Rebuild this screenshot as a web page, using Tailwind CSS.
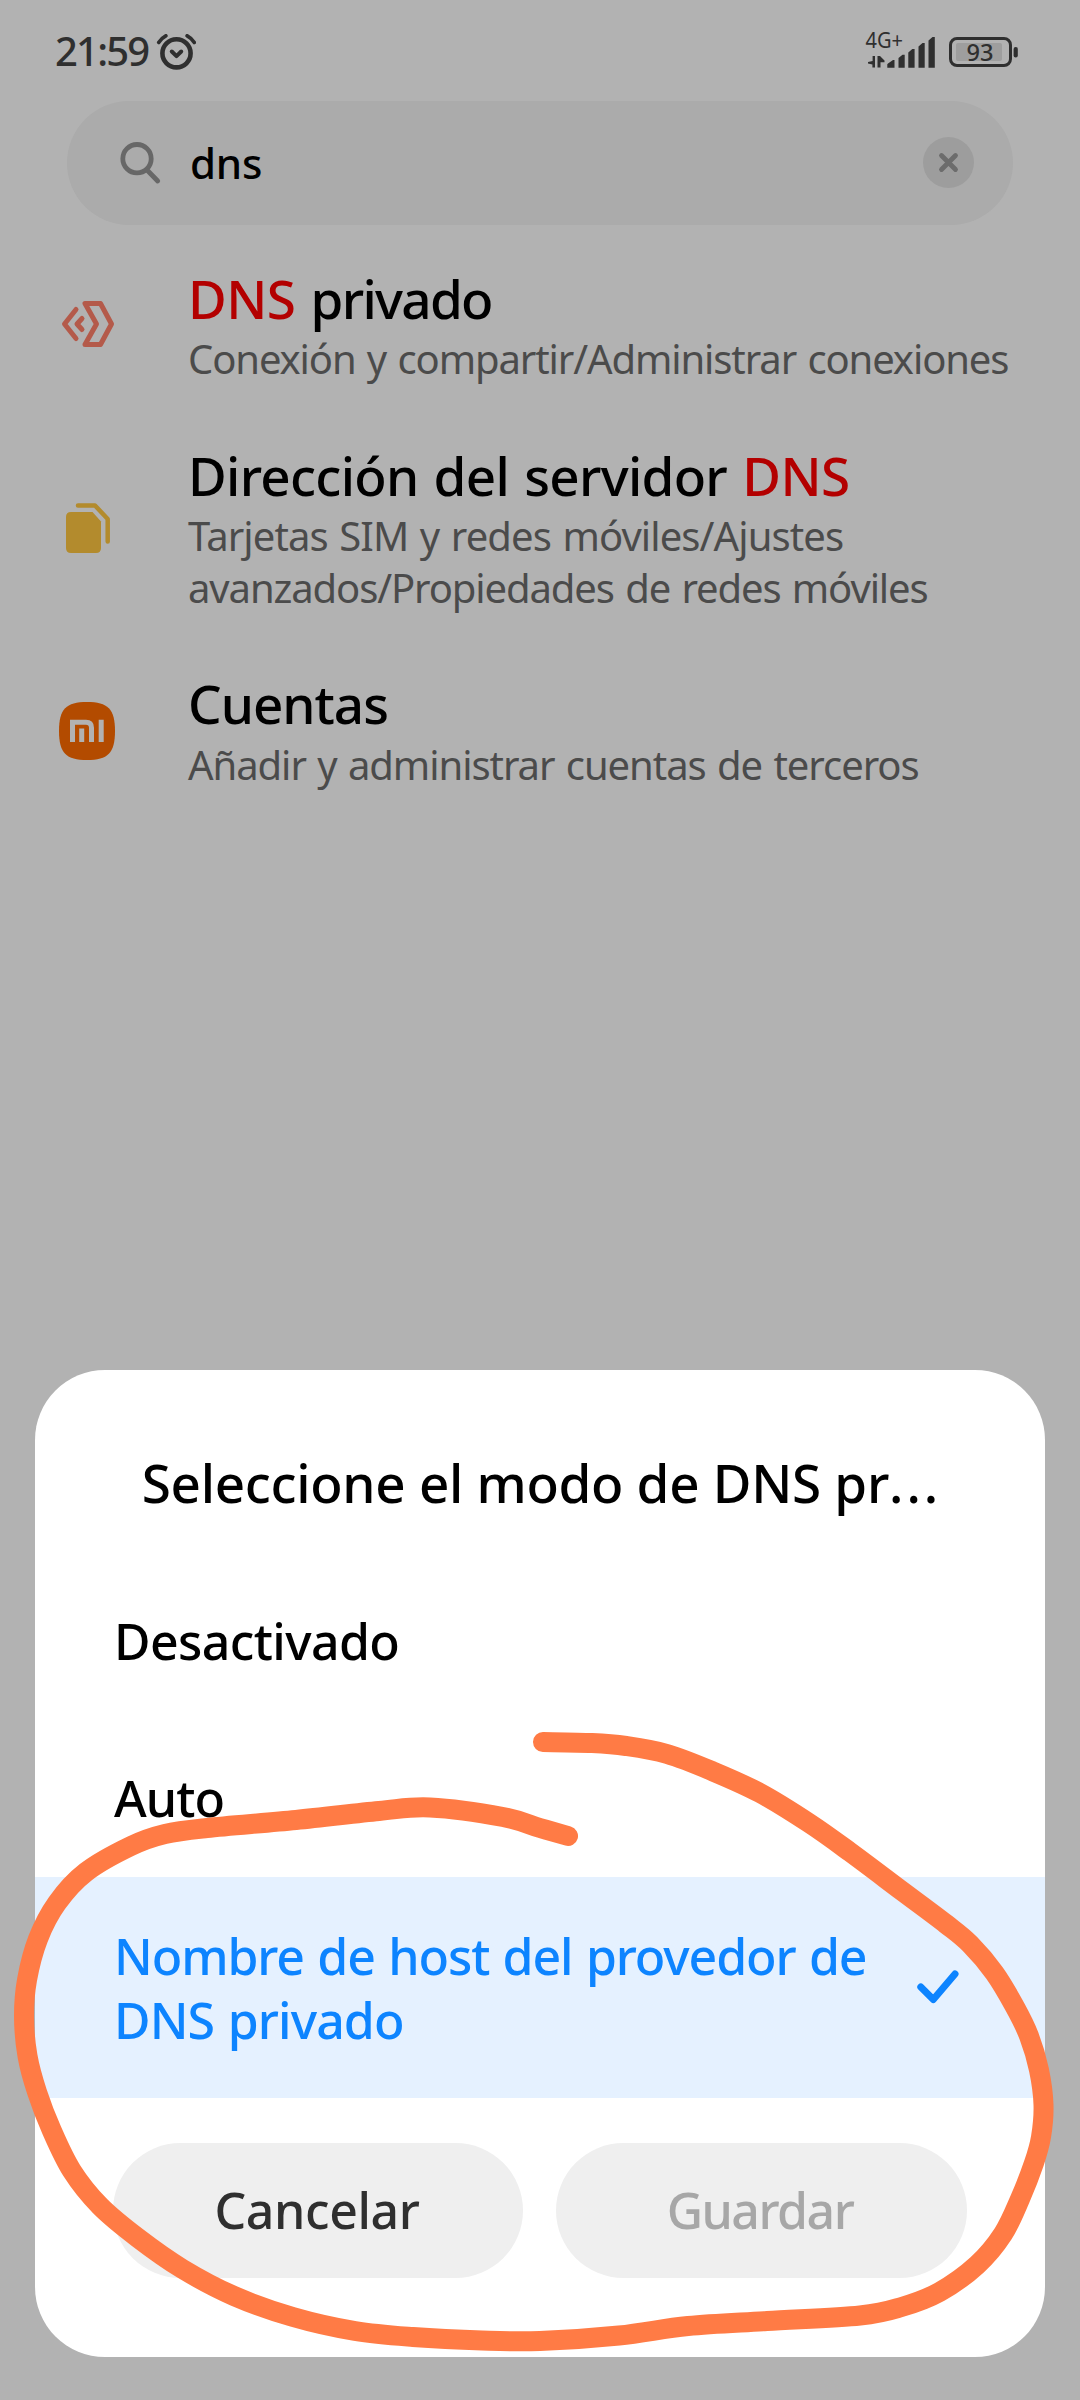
<!DOCTYPE html>
<html lang="es">
<head>
<meta charset="utf-8">
<title>Ajustes</title>
<script src="https://cdn.jsdelivr.net/npm/@tailwindcss/browser@4"></script>
</head>
<body class="relative w-[1080px] h-[2400px] overflow-hidden bg-[#b2b2b2] font-['Noto_Sans',sans-serif] text-black">

<header class="flex h-[101px] items-center justify-between pl-[55px] pr-[62px] text-[#2f2f2f]">
  <div class="flex items-center">
    <span class="w-[101px] text-[40px] leading-[101px] font-medium tracking-[-1.8px] whitespace-nowrap">21:59</span>
    <svg class="mt-[5px] h-[38px] w-[40px]" viewBox="156 34 40 38" fill="none" stroke="currentColor" stroke-linecap="round" stroke-linejoin="round"><circle cx="176.5" cy="53.3" r="14.1" stroke-width="4.6"/><path d="M158.8 42.4Q161 38.5 165.8 35.9M187.2 35.9Q192 38.5 194.2 42.4" stroke-width="3.8"/><path d="M171.8 51.5l4.7 4.6 4.7-4.6" stroke-width="4"/></svg>
  </div>
  <svg class="mt-[3px] h-[60px] w-[158px]" viewBox="860 22 158 60" fill="currentColor">
    <text x="865.5" y="48.2" font-size="21" textLength="37.5" lengthAdjust="spacingAndGlyphs">4G+</text>
    <path d="M872.600 56h2.400v11.500h-2.600v-3L868 63.500v-1.500l4.600-1zM877.500 56h2.500l4.500 4.500v1.800h-4v5.200h-3z"/>
    <path d="M888 63.500l5-3.500h1.500v7.800h-7.200v-3.500zM898.500 58l4-3.200h2.200v13h-6.200zM908.300 52.500l4-3.500h2.300v18.800h-6.300zM918.500 46.500l4-3.500h2.200v24.800h-6.200zM928.500 40.500l4-3.500h2.300v30.800h-6.300z"/>
    <rect x="956" y="43" width="46" height="18" rx="2" fill="#9e9e9e"/>
    <rect x="950.500" y="38.500" width="60" height="27" rx="6.500" fill="none" stroke="currentColor" stroke-width="3"/>
    <rect x="1013.600" y="47" width="4.200" height="10.500" rx="2"/>
    <text x="966.500" y="61" font-size="24" font-weight="500" textLength="27" lengthAdjust="spacingAndGlyphs">93</text>
  </svg>
</header>

<div class="mx-[67px] flex h-[124px] items-center rounded-full bg-[#ababab] pl-[50px] pr-[39px]">
  <svg class="h-[46px] w-[46px]" viewBox="117 140 46 46" fill="none" stroke="#676767" stroke-width="4.8" stroke-linecap="round"><circle cx="137" cy="158.7" r="14.2"/><path d="M147.5 170.5L157.7 181"/></svg>
  <span class="ml-[27px] flex-1 text-[42px] leading-[124px] font-medium tracking-[-0.2px]">dns</span>
  <svg class="mb-px h-[51px] w-[51px]" viewBox="0 0 51 51"><circle cx="25.5" cy="25.5" r="25.5" fill="#9d9d9d"/><path d="M18.500 18.500l14 14M32.500 18.500l-14 14" stroke="#6c6c6c" stroke-width="4.800" stroke-linecap="round"/></svg>
</div>

<main class="mt-[39px] flex flex-col gap-[56px] pl-[59px] whitespace-nowrap">
  <section class="flex items-center">
    <svg class="mr-[73px] mb-[2px] h-[56px] w-[56px]" viewBox="59 296 56 56" fill="none" stroke="#b45a4a" stroke-width="5" stroke-linecap="round" stroke-linejoin="round"><path d="M85 303.500h15.500L111.500 324l-11 20.500H85L96.500 324zM76 309.500L64.500 324 76 338.500M82 318.500l-5 5.500 5 5.500"/></svg>
    <div class="pt-px">
      <h2 class="text-[53px] leading-[68px] font-medium tracking-[-1.7px]"><span class="tracking-[-0.5px] text-[#b30000]">DNS</span><span class="ml-[3px]"> privado</span></h2>
      <p class="text-[40px] leading-[52px] tracking-[-1.1px] [word-spacing:2px] text-[#4b4b4b]">Conexión y compartir/Administrar conexiones</p>
    </div>
  </section>
  <section class="flex items-center">
    <svg class="mr-[73px] h-[56px] w-[56px]" viewBox="59 500 56 56"><path d="M71 512h21.500L101 521.500V548q0 5-5 5H71q-5 0-5-5V517q0-5 5-5z" fill="#b38b2d"/><path d="M78 505.500h17l12.700 13.500V541.500" fill="none" stroke="#b38b2d" stroke-width="4.500" stroke-linecap="round" stroke-linejoin="round"/></svg>
    <div class="pt-px">
      <h2 class="text-[53px] leading-[68px] font-medium tracking-[-0.7px] [word-spacing:2px]">Dirección del servidor <span class="tracking-[-0.5px] text-[#b30000]">DNS</span></h2>
      <p class="text-[40px] leading-[52px] text-[#4b4b4b] [word-spacing:2px]"><span class="tracking-[-0.9px]">Tarjetas SIM y redes móviles/Ajustes</span><br><span class="tracking-[-1.1px]">avanzados/Propiedades de redes móviles</span></p>
    </div>
  </section>
  <section class="flex items-center">
    <svg class="mr-[73px] h-[58px] w-[56px]" viewBox="0 0 56 58"><path d="M28 0C49 0 56 7 56 29S49 58 28 58 0 51 0 29 7 0 28 0z" fill="#b34b00"/><path d="M13.500 40V20.300h13.500q5.500 0 5.500 5.500V40M22.700 26.500V40M42.200 17.800V40" fill="none" stroke="#b2b2b2" stroke-width="5"/></svg>
    <div>
      <h2 class="text-[53px] leading-[68px] font-medium tracking-[-1px]">Cuentas</h2>
      <p class="pt-px text-[40px] leading-[52px] tracking-[-1.05px] [word-spacing:2px] text-[#4b4b4b]">Añadir y administrar cuentas de terceros</p>
    </div>
  </section>
</main>

<div role="dialog" class="absolute top-[1370px] left-[35px] flex h-[987px] w-[1010px] flex-col rounded-[70px] bg-white pt-[78px] whitespace-nowrap">
  <h1 class="mb-[45px] h-[70px] pl-[3px] text-center text-[53px] leading-[70px] font-medium tracking-[-0.3px]">Seleccione el modo de DNS pr<span class="tracking-[3px]">...</span></h1>
  <div class="h-[157px] pl-[79px] text-[50px] leading-[157px] font-medium tracking-[-0.6px]">Desactivado</div>
  <div class="h-[157px] pl-[79px] text-[50px] leading-[157px] font-medium tracking-[-0.9px]">Auto</div>
  <div class="flex h-[221px] items-center justify-between bg-[#e5f1ff] pr-[84px] pl-[79px] text-[#0d84ff]">
    <div class="text-[50px] leading-[64px] font-medium [word-spacing:1.5px]"><span class="tracking-[-1.1px]">Nombre de host del provedor de</span><br><span class="tracking-[-0.9px]">DNS privado</span></div>
    <svg class="mb-px h-[40px] w-[46px]" viewBox="915 1967 46 40" fill="none" stroke="currentColor" stroke-width="7" stroke-linecap="round" stroke-linejoin="round"><path d="M920.800 1987l12.500 12.500 21.700-25.500"/></svg>
  </div>
  <div class="mt-[45px] flex gap-[33px] px-[78px] text-center text-[50px] leading-[135px] font-medium">
    <div class="h-[135px] w-[410px] rounded-full bg-[#efefef] pr-[2px] tracking-[-0.4px] text-[#2f2f2f]">Cancelar</div>
    <div class="h-[135px] w-[411px] rounded-full bg-[#efefef] pr-[3px] tracking-[-1.5px] text-[#a7a7a7]">Guardar</div>
  </div>
</div>

<svg class="absolute inset-0 h-[2400px] w-[1080px]" viewBox="0 0 1080 2400"><path id="marker" fill="none" stroke="#ff7b45" stroke-width="20" stroke-linecap="round" stroke-linejoin="round"/></svg>
<script>
// Smooth freehand marker stroke through the recorded points
const pts = [[543,1742],[592,1743],[626,1746],[667,1754],[712,1771],[760,1793],[809,1823],[850,1852],[902,1891],[946,1924],[970,1944],[994.5,1973],[1015,2007],[1029,2036],[1039,2070],[1043.5,2105],[1041,2137],[1034,2163],[1020,2199],[1003,2234],[977,2265],[939.5,2292],[901.5,2307],[860,2315.5],[767,2321],[688,2326],[619,2335.5],[540,2341],[482,2340.5],[413,2337],[355,2331],[293,2317],[234,2296],[182.5,2269],[138,2238],[100,2206],[72,2171],[51.6,2130],[37,2092],[27.5,2056],[24,2017],[27,1980],[38,1939],[57,1903],[86,1872],[131,1846],[165,1834],[207,1828],[296,1820],[379,1811],[430,1807.5],[503,1817],[540,1828],[568,1836]];
let d = 'M' + pts[0];
for (let i = 0; i < pts.length - 1; i++) {
  const a = pts[i - 1] || pts[i], b = pts[i], c = pts[i + 1], e = pts[i + 2] || c;
  d += 'C' + [b[0] + (c[0] - a[0]) / 6, b[1] + (c[1] - a[1]) / 6, c[0] - (e[0] - b[0]) / 6, c[1] - (e[1] - b[1]) / 6, c[0], c[1]];
}
document.getElementById('marker').setAttribute('d', d);
</script>
</body>
</html>
